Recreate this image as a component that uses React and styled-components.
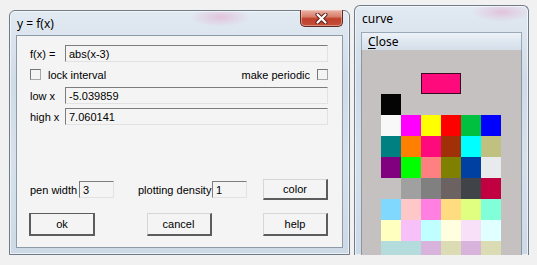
import styled, { createGlobalStyle } from "styled-components";

const GlobalStyle = createGlobalStyle`
  html, body {
    margin: 0;
    padding: 0;
    background: #f1f1f1;
  }
  body {
    font-family: "Liberation Sans", Arial, sans-serif;
  }
`;

const Page = styled.div`
  display: flex;
  align-items: flex-start;
  width: 537px;
  height: 265px;
  padding-left: 9px;
  box-sizing: border-box;
  overflow: hidden;
  background: #f1f1f1;
`;

const Window = styled.div`
  display: flex;
  flex-direction: column;
  box-sizing: border-box;
  border: 1px solid #6f7b88;
  border-radius: 6px 6px 0 0;
  background-image: radial-gradient(
      ellipse 30px 10px at ${(p) => p.$tint || "60%"} 6px,
      rgba(226, 150, 196, 0.45),
      rgba(226, 150, 196, 0)
    ),
    linear-gradient(180deg, #e2eaf2 0%, #cfdbe7 30%, #d6e1ec 60%, #cddae6 100%);
  box-shadow: inset 0 0 0 1px rgba(255, 255, 255, 0.6);
`;

const DialogWindow = styled(Window)`
  width: 341px;
  height: 245px;
  margin-top: 10px;
`;

const CurveWindow = styled(Window)`
  width: 175px;
  height: 250px;
  margin-top: 5px;
  margin-left: 4px;
  border-bottom: none;
`;

const TitleBar = styled.div`
  display: flex;
  align-items: flex-start;
  justify-content: space-between;
  height: ${(p) => p.$height}px;
  padding-left: 7px;
  padding-right: 6px;
  flex-shrink: 0;
`;

const TitleText = styled.span`
  font-family: "Noto Sans", "Open Sans", sans-serif;
  font-size: 12px;
  color: #000;
  line-height: ${(p) => p.$line}px;
`;

const CloseBox = styled.div`
  display: flex;
  align-items: center;
  justify-content: center;
  width: 43px;
  height: 17px;
  margin-top: -1px;
  box-sizing: border-box;
  border: 1px solid #5e2a24;
  border-top: none;
  border-radius: 0 0 5px 5px;
  background: linear-gradient(180deg, #eab4a6 0%, #d8826e 40%, #c0412c 55%, #c2503a 100%);
  box-shadow: inset 0 0 0 1px rgba(255, 220, 210, 0.45);
`;

const Client = styled.div`
  flex: 1;
  display: flex;
  flex-direction: column;
  margin: 0 6px 6px;
  padding: 9px 14px 11px 13px;
  border: 1px solid #8d9aa8;
  background: #f4f4f4;
  font-size: 11px;
  color: #000;
`;

const Rows = styled.div`
  display: flex;
  flex-direction: column;
  gap: 4px;
`;

const Row = styled.div`
  display: flex;
  align-items: center;
  height: ${(p) => p.$h || 17}px;
  justify-content: ${(p) => p.$justify || "flex-start"};
`;

const Label = styled.span`
  width: ${(p) => p.$w}px;
  flex-shrink: 0;
  white-space: nowrap;
  margin-left: ${(p) => p.$ml || 0}px;
`;

const Field = styled.div`
  box-sizing: border-box;
  height: 17px;
  width: ${(p) => (p.$w ? `${p.$w}px` : "auto")};
  flex: ${(p) => (p.$w ? "0 0 auto" : "1")};
  padding: 1px 3px 0;
  line-height: 14px;
  border-top: 1px solid #7c7c7c;
  border-left: 1px solid #7c7c7c;
  border-right: 1px solid #e2e2e2;
  border-bottom: 1px solid #e2e2e2;
  background: #f4f4f4;
  white-space: nowrap;
  overflow: hidden;
`;

const Check = styled.span`
  display: inline-block;
  box-sizing: border-box;
  width: 11px;
  height: 11px;
  border: 1px solid #a8a8a8;
  border-top-color: #767676;
  border-left-color: #767676;
  background: #f4f4f4;
`;

const CheckGroup = styled.div`
  display: flex;
  align-items: center;
  gap: 7px;
`;

const Bottom = styled.div`
  margin-top: auto;
  display: flex;
  flex-direction: column;
  gap: 13px;
`;

const ButtonRow = styled.div`
  display: flex;
  justify-content: space-between;
  margin-left: -1px;
`;

const Button = styled.div`
  display: flex;
  align-items: center;
  justify-content: center;
  box-sizing: border-box;
  width: ${(p) => p.$w || 65}px;
  height: ${(p) => p.$h || 23}px;
  margin-left: ${(p) => (p.$auto ? "auto" : "0")};
  background: #f4f4f4;
  border-top: 1px solid ${(p) => (p.$default ? "#5c5c5c" : "#d6d6d6")};
  border-left: ${(p) => (p.$default ? "2px solid #5c5c5c" : "1px solid #d6d6d6")};
  border-right: 2px solid #5c5c5c;
  border-bottom: 2px solid #5c5c5c;
  font-size: 11px;
`;

const MenuBar = styled.div`
  display: flex;
  align-items: center;
  height: 18px;
  flex-shrink: 0;
  margin: 0 6px;
  padding-left: 6px;
  box-sizing: border-box;
  border: 1px solid #9aa9b8;
  border-bottom: none;
  background: linear-gradient(180deg, #eef3f8 0%, #dfe7f0 50%, #d4dfea 100%);
  font-family: "Noto Sans", "Open Sans", sans-serif;
  font-size: 12px;
  color: #000;

  u {
    text-decoration: underline;
    text-underline-offset: 2px;
  }
`;

const Palette = styled.div`
  flex: 1;
  min-height: 0;
  display: flex;
  flex-direction: column;
  align-items: flex-start;
  margin: 0 6px;
  padding: 23px 0 0 19px;
  border-left: 1px solid #8a96a2;
  border-right: 1px solid #8a96a2;
  background: #c5c1c1;
  overflow: hidden;
`;

const Swatch = styled.div`
  flex-shrink: 0;
  width: 40px;
  height: 21px;
  margin-left: 40px;
  box-sizing: border-box;
  border: 1px solid #3a0a1e;
  background: ${(p) => p.$color};
`;

const Grid = styled.div`
  flex-shrink: 0;
  display: grid;
  grid-template-columns: repeat(6, 20px);
  grid-auto-rows: 21px;
`;

const Cell = styled.div`
  background: ${(p) => p.$color || "transparent"};
`;

const colors = [
  ["#040404", null, null, null, null, null],
  ["#f8f8f8", "#ff00ff", "#ffff00", "#ff0000", "#00c040", "#0000ff"],
  ["#008080", "#ff8000", "#ff0a7c", "#a03008", "#00ffff", "#c0c080"],
  ["#800080", "#00ff00", "#ff8080", "#808000", "#0040a0", "#e8eaee"],
  [null, "#a0a0a0", "#808080", "#6c6262", "#404448", "#c00040"],
  ["#80d8ff", "#ffc8c8", "#ff80e0", "#ffdc80", "#e0ff80", "#80ffd8"],
  ["#ffffc0", "#f8c0f8", "#c0ffff", "#ffffe0", "#f8e0f8", "#e0ffff"],
  ["#b4dcdc", "#b4dcdc", "#d8b4dc", "#dcdcb4", "#d8b4dc", "#dcdcb4"],
];

function CloseX() {
  return (
    <svg width="13" height="11" viewBox="0 0 13 11">
      <path d="M2.5 1.5 L10.5 9.5 M10.5 1.5 L2.5 9.5" stroke="#5a1e18" strokeWidth="4" strokeLinecap="round" />
      <path d="M2.5 1.5 L10.5 9.5 M10.5 1.5 L2.5 9.5" stroke="#ffffff" strokeWidth="2.2" strokeLinecap="round" />
    </svg>
  );
}

export default function App() {
  return (
    <>
      <GlobalStyle />
      <Page>
        <DialogWindow $tint="62%">
          <TitleBar $height={24}>
            <TitleText $line={26}>y = f(x)</TitleText>
            <CloseBox>
              <CloseX />
            </CloseBox>
          </TitleBar>
          <Client>
            <Rows>
              <Row>
                <Label $w={35}>f(x) =</Label>
                <Field>abs(x-3)</Field>
              </Row>
              <Row $justify="space-between">
                <CheckGroup>
                  <Check />
                  <span>lock interval</span>
                </CheckGroup>
                <CheckGroup>
                  <span>make periodic</span>
                  <Check />
                </CheckGroup>
              </Row>
              <Row>
                <Label $w={35}>low x</Label>
                <Field>-5.039859</Field>
              </Row>
              <Row>
                <Label $w={35}>high x</Label>
                <Field>7.060141</Field>
              </Row>
            </Rows>
            <Bottom>
              <Row $h={21}>
                <Label $w={49}>pen width</Label>
                <Field $w={35}>3</Field>
                <Label $w={74} $ml={24}>plotting density</Label>
                <Field $w={35}>1</Field>
                <Button $h={21} $auto>color</Button>
              </Row>
              <ButtonRow>
                <Button $w={66} $default>ok</Button>
                <Button>cancel</Button>
                <Button>help</Button>
              </ButtonRow>
            </Bottom>
          </Client>
        </DialogWindow>
        <CurveWindow $tint="85%">
          <TitleBar $height={26}>
            <TitleText $line={26}>curve</TitleText>
          </TitleBar>
          <MenuBar>
            <span>
              <u>C</u>lose
            </span>
          </MenuBar>
          <Palette>
            <Swatch $color="#ff0a7c" />
            <Grid>
              {colors.flat().map((c, i) => (
                <Cell key={i} $color={c} />
              ))}
            </Grid>
          </Palette>
        </CurveWindow>
      </Page>
    </>
  );
}
